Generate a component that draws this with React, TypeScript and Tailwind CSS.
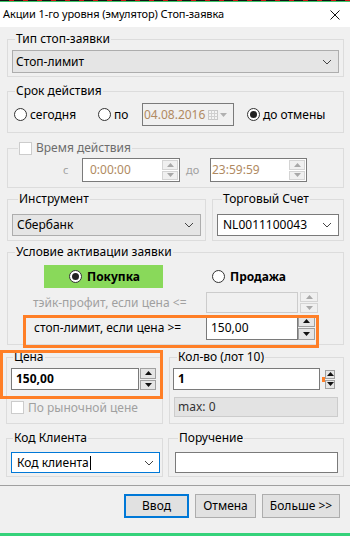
import React from "react";

function Tri({ down, light }: { down?: boolean; light?: boolean }) {
  return (
    <svg width="7" height="4" viewBox="0 0 7 4">
      <polygon points={down ? "0,0 7,0 3.5,4" : "0,4 7,4 3.5,0"} fill={light ? "#a8a8a8" : "#111"} />
    </svg>
  );
}

function Spin({ light, w }: { light?: boolean; w: string }) {
  const btn = light
    ? "flex-1 border border-[#d4d4d4] bg-[#f0f0f0] flex items-center justify-center"
    : "flex-1 border border-[#a0a0a0] bg-[#e5e5e5] flex items-center justify-center";
  return (
    <div className={`flex flex-col gap-[1px] self-stretch shrink-0 ${w}`}>
      <div className={btn}>
        <Tri light={light} />
      </div>
      <div className={btn}>
        <Tri down light={light} />
      </div>
    </div>
  );
}

function Radio({ checked }: { checked?: boolean }) {
  return (
    <span className="w-[13px] h-[13px] rounded-full border border-[#333] bg-white flex items-center justify-center shrink-0">
      {checked && <span className="w-[7px] h-[7px] rounded-full bg-[#222]" />}
    </span>
  );
}

function Chevron() {
  return (
    <svg width="10" height="6" viewBox="0 0 10 6" className="shrink-0">
      <polyline points="1,1 5,5 9,1" fill="none" stroke="#444" strokeWidth="1" />
    </svg>
  );
}

function Check() {
  return <span className="w-[13px] h-[13px] border border-[#cccccc] bg-white shrink-0" />;
}

export default function App() {
  return (
    <div className="w-[350px] h-[536px] bg-[#f0f0f0] flex flex-col text-[12px] text-black overflow-hidden relative font-['Noto_Sans',sans-serif]">
      <div className="h-[1px] bg-[repeating-linear-gradient(90deg,#111_0_9px,#d01010_9px_14px)] shrink-0" />
      <div className="h-[1px] bg-[#3cc46a] shrink-0" />
      <div className="h-[25px] bg-white flex items-center justify-between pl-[3px] pr-[10px] shrink-0">
        <span className="text-[11px] tracking-[-0.1px]">Акции 1-го уровня (эмулятор) Стоп-заявка</span>
        <svg width="10" height="10" viewBox="0 0 10 10">
          <path d="M0.5 0.5 L9.5 9.5 M9.5 0.5 L0.5 9.5" stroke="#111" strokeWidth="1" />
        </svg>
      </div>

      <div className="flex flex-col px-[6px]">
        {/* Тип стоп-заявки */}
        <fieldset className="ml-[1px] mt-[4px] border border-[#dcdcdc] px-[4px] pb-[3px]">
          <legend className="ml-[3px] px-[1px] leading-[16px]">Тип стоп-заявки</legend>
          <div className="mt-[3px] h-[23px] bg-[#e5e5e5] border border-[#adadad] flex items-center justify-between pl-[3px] pr-[6px]">
            <span>Стоп-лимит</span>
            <Chevron />
          </div>
        </fieldset>

        {/* Срок действия */}
        <fieldset className="ml-[1px] mt-[6px] border border-[#dcdcdc] pb-[6px]">
          <legend className="ml-[7px] px-[1px] leading-[16px]">Срок действия</legend>
          <div className="mt-[4px] h-[23px] flex items-center pl-[6px]">
            <label className="w-[84px] flex items-center gap-[3px]">
              <Radio />
              <span>сегодня</span>
            </label>
            <label className="w-[44px] flex items-center gap-[3px]">
              <Radio />
              <span>по</span>
            </label>
            <div className="w-[92px] h-[23px] border border-[#7a7a7a] flex items-center pl-[1px] pr-[6px] justify-between">
              <span className="text-[#b08a62]">04.08.2016</span>
              <span className="flex items-center gap-[2px]">
                <svg width="10" height="10" viewBox="0 0 10 10">
                  <rect x="0.5" y="0.5" width="9" height="9" fill="#f4f4f4" stroke="#c8c8c8" />
                  <path d="M0.5 3.5H9.5M0.5 6.5H9.5M3.5 0.5V9.5M6.5 0.5V9.5" stroke="#d0d0d0" />
                </svg>
                <svg width="7" height="4" viewBox="0 0 7 4">
                  <polygon points="0,0 7,0 3.5,4" fill="#b0b0b0" />
                </svg>
              </span>
            </div>
            <label className="ml-[13px] flex items-center gap-[3px]">
              <Radio checked />
              <span>до отмены</span>
            </label>
          </div>
        </fieldset>

        {/* Время действия */}
        <fieldset className="ml-[1px] mt-[7px] border border-[#dcdcdc] pb-[5px]">
          <legend className="ml-[10px] px-[1px] leading-[16px] flex items-center gap-[4px]">
            <Check />
            <span className="text-[#6d6d6d]">Время действия</span>
          </legend>
          <div className="mt-[2px] h-[24px] flex items-center">
            <span className="w-[74px] pl-[55px] text-[#a0a0a0] text-[11px]">с</span>
            <div className="w-[98px] h-[24px] border border-[#7a7a7a] bg-white flex items-center pl-[7px] pr-[1px] py-[1px]">
              <span className="flex-1 text-[#b08a62]">0:00:00</span>
              <Spin light w="w-[16px]" />
            </div>
            <span className="w-[30px] pl-[6px] text-[#a0a0a0] text-[11px]">до</span>
            <div className="w-[97px] h-[24px] border border-[#7a7a7a] bg-white flex items-center pl-[1px] pr-[1px] py-[1px]">
              <span className="flex-1 text-[#b08a62]">23:59:59</span>
              <Spin light w="w-[16px]" />
            </div>
          </div>
        </fieldset>

        {/* Инструмент / Торговый Счет */}
        <div className="ml-[1px] mt-[3px] flex gap-[6px]">
          <fieldset className="w-[199px] border border-[#dcdcdc] px-[4px] pb-[4px]">
            <legend className="ml-[6px] px-[1px] leading-[16px]">Инструмент</legend>
            <div className="mt-[7px] h-[22px] bg-[#e5e5e5] border border-[#adadad] flex items-center justify-between pl-[4px] pr-[6px]">
              <span>Сбербанк</span>
              <Chevron />
            </div>
          </fieldset>
          <fieldset className="w-[132px] border border-[#dcdcdc] px-[4px] pb-[4px]">
            <legend className="ml-[5px] px-[1px] leading-[16px]">Торговый Счет</legend>
            <div className="mt-[7px] h-[22px] bg-white border border-[#7a7a7a] flex items-center justify-between pl-[5px] pr-[6px]">
              <span>NL0011100043</span>
              <Chevron />
            </div>
          </fieldset>
        </div>

        {/* Условие активации заявки */}
        <fieldset className="ml-[1px] mt-[3px] border border-[#dcdcdc] pb-[4px]">
          <legend className="ml-[7px] px-[1px] leading-[16px]">Условие активации заявки</legend>
          <div className="mt-[5px] h-[23px] flex items-center">
            <div className="ml-[36px] w-[119px] h-[23px] bg-[#89d95a] flex items-center pl-[25px] gap-[5px]">
              <Radio checked />
              <span className="font-bold">Покупка</span>
            </div>
            <label className="ml-[49px] flex items-center gap-[5px]">
              <Radio />
              <span className="font-bold">Продажа</span>
            </label>
          </div>
          <div className="mt-[4px] h-[21px] flex items-center">
            <span className="w-[198px] pl-[25px] text-[#a0a0a0]">тэйк-профит, если цена &lt;=</span>
            <div className="w-[92px] h-[21px] border border-[#cccccc] bg-[#f0f0f0]" />
            <div className="ml-[2px] h-[21px] flex">
              <Spin light w="w-[18px]" />
            </div>
          </div>
          <div className="mt-[2px] h-[25px] flex items-center">
            <span className="w-[198px] pl-[26px]">стоп-лимит, если цена &gt;=</span>
            <div className="w-[92px] h-[25px] border border-[#7a7a7a] bg-white flex items-center pl-[4px]">
              <span>150,00</span>
            </div>
            <div className="h-[25px] flex">
              <Spin w="w-[17px]" />
            </div>
          </div>
        </fieldset>

        {/* Цена / Кол-во */}
        <div className="mt-[4px] flex gap-[6px]">
          <fieldset className="w-[157px] border border-[#dcdcdc] pb-[9px]">
            <legend className="ml-[6px] px-[1px] leading-[16px]">Цена</legend>
            <div className="mt-[3px] h-[22px] flex ml-[4px]">
              <div className="w-[128px] h-[22px] border border-[#7a7a7a] bg-white flex items-center pl-[4px]">
                <span className="font-bold">150,00</span>
              </div>
              <div className="ml-[1px] flex">
                <Spin w="w-[16px]" />
              </div>
            </div>
            <div className="mt-[11px] ml-[4px] flex items-center gap-[4px] h-[13px]">
              <Check />
              <span className="text-[#a0a0a0]">По рыночной цене</span>
            </div>
          </fieldset>
          <fieldset className="w-[175px] border border-[#dcdcdc] pb-[5px]">
            <legend className="ml-[7px] px-[1px] leading-[16px]">Кол-во (лот 10)</legend>
            <div className="mt-[3px] h-[22px] flex ml-[3px] items-center">
              <div className="w-[147px] h-[22px] border border-[#7a7a7a] bg-white flex items-center pl-[4px]">
                <span className="font-bold">1</span>
              </div>
              <div className="ml-[2px] w-[3px] h-[5px] bg-[#ff7f27]" />
              <div className="h-[19px] flex">
                <Spin w="w-[10px]" />
              </div>
            </div>
            <div className="mt-[7px] ml-[4px] w-[164px] h-[20px] border border-[#cccccc] bg-[#e3e3e3] flex items-center pl-[3px] text-[#333]">
              max: 0
            </div>
          </fieldset>
        </div>

        {/* Код Клиента / Поручение */}
        <div className="mt-[6px] flex gap-[5px]">
          <fieldset className="w-[157px] border border-[#dcdcdc] pb-[3px]">
            <legend className="ml-[6px] px-[1px] leading-[16px]">Код Клиента</legend>
            <div className="mt-[6px] ml-[4px] w-[149px] h-[21px] border border-[#0078d7] bg-white flex items-center justify-between pl-[5px] pr-[5px]">
              <span className="flex items-center">
                Код клиента<span className="w-[1px] h-[14px] bg-black ml-[1px]" />
              </span>
              <Chevron />
            </div>
          </fieldset>
          <fieldset className="w-[176px] border border-[#dcdcdc] pb-[3px]">
            <legend className="ml-[9px] px-[1px] leading-[16px]">Поручение</legend>
            <div className="mt-[6px] ml-[6px] w-[163px] h-[21px] border border-[#7a7a7a] bg-white" />
          </fieldset>
        </div>
      </div>

      <div className="mt-[8px] h-[1px] bg-[#a0a0a0] shrink-0" />

      <div className="mt-[8px] flex justify-end gap-[6px] pr-[10px]">
        <button className="w-[65px] h-[24px] border-2 border-[#0078d7] bg-[#e1e1e1] flex items-center justify-center">
          Ввод
        </button>
        <button className="w-[61px] h-[24px] border border-[#adadad] bg-[#e1e1e1] flex items-center justify-center">
          Отмена
        </button>
        <button className="w-[78px] h-[24px] border border-[#adadad] bg-[#e1e1e1] flex items-center justify-center">
          Больше &gt;&gt;
        </button>
      </div>

      <div className="mt-auto h-[3px] bg-[#35d27a] shrink-0" />

      <div className="absolute left-[23px] top-[315px] w-[296px] h-[33px] border-[3px] border-[#ff7f27] pointer-events-none" />
      <div className="absolute left-0 top-[350px] w-[163px] h-[49px] border-[3px] border-[#ff7f27] pointer-events-none" />
    </div>
  );
}
